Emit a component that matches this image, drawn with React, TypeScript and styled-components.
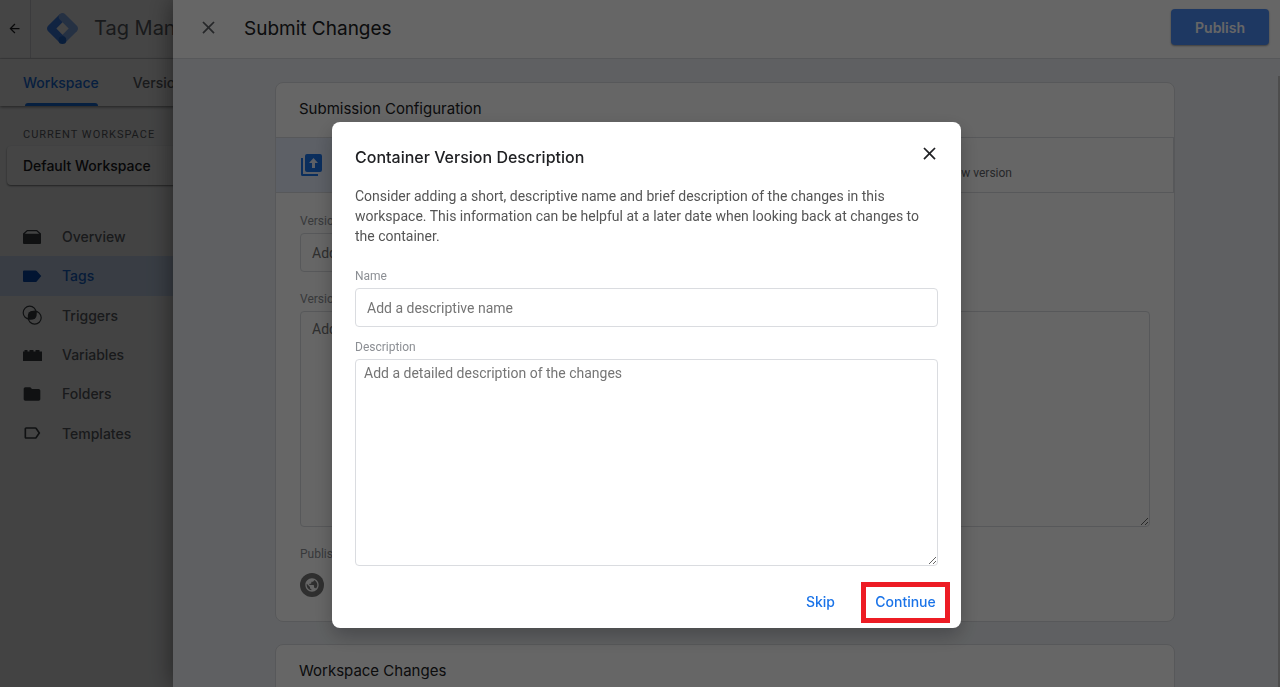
import React from "react";
import styled, { createGlobalStyle, css } from "styled-components";
import { MdArrowBack, MdClose, MdFolder, MdLabelOutline, MdPublic } from "react-icons/md";

const display = `"Google Sans", Inter, "Liberation Sans", sans-serif`;
const body = `Roboto, "Liberation Sans", sans-serif`;

const GlobalStyle = createGlobalStyle`
  *, *::before, *::after { box-sizing: border-box; }
  html, body, #root { height: 100%; }
  body { margin: 0; overflow: hidden; background: #fff; color: #3c4043; font-family: ${body}; font-size: 14px; }
  button { font: inherit; border: 0; padding: 0; background: none; color: inherit; cursor: pointer; }
  h1, h2, p, ul { margin: 0; padding: 0; font-weight: 400; }
`;

/* Workspace page */

const Page = styled.div`
  display: flex;
  flex-direction: column;
  height: 100%;
  background: #f8f9fa;
`;

const TopBar = styled.header`
  display: flex;
  align-items: stretch;
  height: 59px;
  background: #fff;
  border-bottom: 1px solid #dadce0;
`;

const BackButton = styled.button`
  display: flex;
  align-items: center;
  justify-content: center;
  width: 31px;
  padding: 0 2px 2px 0;
  color: #202124;
  border-right: 1px solid #dadce0;
`;

const Brand = styled.div`
  display: flex;
  align-items: center;
  gap: 16px;
  padding: 0 0 2px 16px;
  font-family: ${display};
  font-size: 20px;
  color: #5f6368;
  white-space: nowrap;
`;

const Tabs = styled.nav`
  display: flex;
  flex: none;
  gap: 34px;
  height: 47px;
  padding-left: 23px;
  background: #fff;
  box-shadow: 0 1px 3px rgba(0, 0, 0, 0.5);
`;

const Tab = styled.a<{ $active?: boolean }>`
  position: relative;
  display: flex;
  align-items: center;
  font-family: ${display};
  font-size: 14px;
  font-weight: 500;
  text-decoration: none;
  color: ${(p) => (p.$active ? "#1a73e8" : "#5f6368")};
  ${(p) =>
    p.$active &&
    css`
      &::after {
        content: "";
        position: absolute;
        left: 2px;
        right: 1px;
        bottom: 0;
        height: 3px;
        border-radius: 3px 3px 0 0;
        background: #1a73e8;
      }
    `}
`;

const Sidebar = styled.aside`
  display: flex;
  flex-direction: column;
  width: 260px;
  padding-top: 21px;
`;

const SidebarLabel = styled.div`
  padding-left: 23px;
  font-size: 11px;
  line-height: 16px;
  letter-spacing: 1px;
  color: #5f6368;
`;

const WorkspaceButton = styled.button`
  height: 39px;
  margin: 3px 0 32px 7px;
  padding-left: 16px;
  border-radius: 4px;
  background: #fff;
  box-shadow: 0 1px 2px rgba(0, 0, 0, 0.5);
  font-family: ${display};
  font-weight: 500;
  text-align: left;
  color: #202124;
`;

const NavList = styled.ul`
  display: grid;
  grid-template-rows: repeat(6, 1fr);
  height: 236px;
  list-style: none;
`;

const NavLink = styled.a<{ $active?: boolean }>`
  display: flex;
  align-items: center;
  gap: 20px;
  height: 100%;
  padding-left: 22px;
  font-family: ${display};
  font-weight: 500;
  text-decoration: none;
  color: ${(p) => (p.$active ? "#1967d2" : "#5f6368")};
  background: ${(p) => (p.$active ? "#d2e3fc" : "transparent")};

  svg {
    color: ${(p) => (p.$active ? "#0b4fb8" : "#3c4043")};
  }
`;

/* Submit drawer */

const DrawerScrim = styled.div`
  position: fixed;
  inset: 0;
  padding-left: 173px;
  background: rgba(0, 0, 0, 0.32);
`;

const Drawer = styled.section`
  position: relative;
  display: flex;
  flex-direction: column;
  height: 100%;
  overflow: hidden;
  background: #f1f3f4;
  box-shadow: 0 0 24px rgba(0, 0, 0, 0.5);
`;

const DrawerHeader = styled.header`
  display: flex;
  flex: none;
  align-items: center;
  height: 59px;
  padding: 0 11px 4px 24px;
  background: #fff;
  border-bottom: 1px solid #dadce0;
`;

const DrawerTitle = styled.h1`
  flex: 1;
  padding: 3px 0 0 24px;
  font-family: ${display};
  font-size: 19px;
  line-height: 24px;
  color: #202124;
`;

const IconButton = styled.button`
  display: flex;
  align-items: center;
  justify-content: center;
  width: 23px;
  height: 24px;
  color: #5f6368;
`;

const PublishButton = styled.button`
  width: 98px;
  height: 36px;
  border-radius: 4px;
  background: #4c8df6;
  box-shadow: 0 1px 2px rgba(0, 0, 0, 0.4);
  font-family: ${display};
  font-weight: 600;
  color: #fff;
`;

const DrawerBody = styled.div`
  display: flex;
  flex: 1;
  flex-direction: column;
  gap: 22px;
  padding: 23px 105px 0 102px;
  background: #eef1f5;
`;

const ScrollThumb = styled.div`
  position: absolute;
  top: 76px;
  right: 0;
  bottom: 0;
  width: 2px;
  background: #c1c1c1;
`;

const Card = styled.section`
  flex: none;
  border: 1px solid #dadce0;
  border-radius: 8px;
  background: #fff;
`;

const CardTitle = styled.h2`
  padding: 13px 23px 15px;
  font-family: ${display};
  font-size: 15px;
  line-height: 26px;
  color: #202124;
`;

const Options = styled.div`
  display: grid;
  grid-template-columns: 1fr 1fr;
  height: 56px;
  border: solid #dadce0;
  border-width: 1px 1px 1px 0;
`;

const Option = styled.button<{ $active?: boolean }>`
  display: flex;
  align-items: center;
  padding: 0 24px;
  color: #5f6368;
  background: ${(p) => (p.$active ? "#e8f0fe" : "transparent")};
`;

const OptionNote = styled.span`
  flex: 1;
  padding: 16px 137px 0 0;
  font-size: 12px;
  text-align: right;
`;

const CardForm = styled.form`
  display: flex;
  flex-direction: column;
  padding: 20px 24px 24px;
`;

const fieldBox = css`
  display: block;
  width: 100%;
  border: 1px solid #dadce0;
  border-radius: 4px;
  background: #fff;
  font-family: ${body};
  font-size: 14px;
  line-height: 20px;
  color: #3c4043;
  outline: 0;
  &::placeholder { color: #757575; opacity: 1; }
`;

const Label = styled.label`
  margin-bottom: 4px;
  font-size: 12px;
  line-height: 16px;
  color: #8c8f94;
`;

const Input = styled.input`
  ${fieldBox}
  height: 39px;
  padding: 0 11px;
`;

const VersionNameInput = styled(Input)`
  width: 50%;
`;

const VersionTextArea = styled.textarea`
  ${fieldBox}
  height: 216px;
  padding: 7px 11px;
`;

const DescriptionTextArea = styled.textarea`
  ${fieldBox}
  height: 207px;
  padding: 3px 8px;
`;

const Field = styled.div<{ $space: number }>`
  display: flex;
  flex-direction: column;
  margin-bottom: ${(p) => p.$space}px;
`;

const EnvironmentBadge = styled.div`
  display: flex;
  align-items: center;
  justify-content: center;
  width: 24px;
  height: 24px;
  margin-top: 7px;
  border-radius: 50%;
  background: #757575;
  color: #fff;
`;

/* Description dialog */

const DialogScrim = styled.div`
  position: fixed;
  inset: 0;
  display: flex;
  align-items: flex-start;
  justify-content: center;
  padding: 122px 0 0 13px;
  background: rgba(0, 0, 0, 0.6);
`;

const Dialog = styled.div`
  width: 629px;
  border-radius: 8px;
  background: #fff;
  box-shadow: 0 8px 20px rgba(0, 0, 0, 0.25);
`;

const DialogHeader = styled.header`
  display: flex;
  justify-content: space-between;
  padding: 19px 20px 0 23px;
`;

const DialogTitle = styled.h2`
  padding-top: 4px;
  font-family: ${display};
  font-size: 16px;
  font-weight: 500;
  line-height: 24px;
  color: #202124;
`;

const DialogText = styled.p`
  padding: 17px 23px 0;
  line-height: 20px;
  color: #555;
`;

const DialogForm = styled.form`
  display: flex;
  flex-direction: column;
  padding: 22px 23px 0;
`;

const DialogActions = styled.footer`
  display: flex;
  justify-content: flex-end;
  gap: 14px;
  padding: 16px 11px 5px;
`;

const TextButton = styled.button<{ $marked?: boolean }>`
  height: 41px;
  min-width: ${(p) => (p.$marked ? 89 : 53)}px;
  padding: 0 0 3px;
  border: ${(p) => (p.$marked ? "5px solid #ed1c24" : "0")};
  font-family: ${display};
  font-weight: 500;
  color: #1a73e8;
`;

const Logo = () => (
  <svg width="31" height="31" viewBox="0 0 2470 2470" aria-hidden="true">
    <path fill="#8ab4f8" d="M1449.8 2376 1021 1946.7l921.1-930.5 436.7 436.6z" />
    <path
      fill="#4285f4"
      d="M1452.9 527.1 1016.3 90.4 90.5 1016.2c-120.6 120.5-120.7 315.8-.2 436.4l.2.2 925.8 925.8 428.3-430.3L745 1235.1z"
    />
    <path
      fill="#8ab4f8"
      d="M2378.7 1016.2 1452.9 90.4c-120.6-120.6-316.1-120.6-436.7 0s-120.6 316.1 0 436.6l926.3 925.8c120.6 120.6 316.1 120.6 436.6 0s120.6-316.1 0-436.6z"
    />
    <circle fill="#246fdb" cx="1231.2" cy="2163.9" r="306" />
  </svg>
);

const OverviewIcon = () => (
  <svg width="20" height="20" viewBox="0 0 20 20" fill="currentColor" aria-hidden="true">
    <path d="M5 3h10l4 3.500V8H1V6.500zM5.500 4.300 2.800 6.800h14.400L14.500 4.300z" fillRule="evenodd" />
    <path d="M1 8h18v8a1 1 0 0 1-1 1H2a1 1 0 0 1-1-1z" />
  </svg>
);

const TagIcon = () => (
  <svg width="20" height="20" viewBox="0 0 20 20" fill="currentColor" aria-hidden="true">
    <path d="M2 4.500h11.500a1.500 1.500 0 0 1 1.200.600L19.300 10l-4.600 5.400a1.500 1.500 0 0 1-1.200.600H2a1 1 0 0 1-1-1V5.500a1 1 0 0 1 1-1z" />
  </svg>
);

const TriggersIcon = () => (
  <svg width="20" height="20" viewBox="0 0 20 20" aria-hidden="true">
    <g fill="none" stroke="currentColor" strokeWidth="1.200">
      <circle cx="7.700" cy="7.700" r="6.500" />
      <circle cx="12.700" cy="12.700" r="6.500" />
    </g>
    <path
      fill="currentColor"
      d="M14.100 6.400A6.500 6.500 0 0 1 6.400 14.100 6.500 6.500 0 0 1 14.100 6.400z"
    />
    <circle fill="currentColor" cx="10.200" cy="10.200" r="4.300" />
  </svg>
);

const VariablesIcon = () => (
  <svg width="20" height="20" viewBox="0 0 20 20" fill="currentColor" aria-hidden="true">
    <path d="M1 6.500h1.500V5h3v1.500h2V5h4v1.500h2V5h4v1.500H20V16H1z" />
  </svg>
);

const UploadIcon = () => (
  <svg width="24" height="24" viewBox="0 0 24 24" fill="#1a73e8" aria-hidden="true">
    <path d="M1 5h2v16h15v2H2.500A1.500 1.500 0 0 1 1 21.500z" />
    <path
      fillRule="evenodd"
      d="M7 1h13a2 2 0 0 1 2 2v14a2 2 0 0 1-2 2H7a2 2 0 0 1-2-2V3a2 2 0 0 1 2-2zm6.500 4L9 10h3v5h3v-5h3z"
    />
  </svg>
);

const navItems = [
  { label: "Overview", icon: <OverviewIcon /> },
  { label: "Tags", icon: <TagIcon />, active: true },
  { label: "Triggers", icon: <TriggersIcon /> },
  { label: "Variables", icon: <VariablesIcon /> },
  { label: "Folders", icon: <MdFolder size={20} /> },
  { label: "Templates", icon: <MdLabelOutline size={20} /> },
];

export default function App() {
  return (
    <>
      <GlobalStyle />
      <Page>
        <TopBar>
          <BackButton aria-label="Back">
            <MdArrowBack size={15} />
          </BackButton>
          <Brand>
            <Logo />
            Tag Manager
          </Brand>
        </TopBar>
        <Tabs>
          <Tab href="#workspace" $active>Workspace</Tab>
          <Tab href="#versions">Versions</Tab>
        </Tabs>
        <Sidebar>
          <SidebarLabel>CURRENT WORKSPACE</SidebarLabel>
          <WorkspaceButton>Default Workspace</WorkspaceButton>
          <NavList>
            {navItems.map((item) => (
              <li key={item.label}>
                <NavLink href={`#${item.label}`} $active={item.active}>
                  {item.icon}
                  {item.label}
                </NavLink>
              </li>
            ))}
          </NavList>
        </Sidebar>
      </Page>

      <DrawerScrim>
        <Drawer>
          <DrawerHeader>
            <IconButton aria-label="Close">
              <MdClose size={21} />
            </IconButton>
            <DrawerTitle>Submit Changes</DrawerTitle>
            <PublishButton>Publish</PublishButton>
          </DrawerHeader>
          <DrawerBody>
            <Card>
              <CardTitle>Submission Configuration</CardTitle>
              <Options>
                <Option $active aria-label="Publish">
                  <UploadIcon />
                </Option>
                <Option>
                  <OptionNote>New version</OptionNote>
                </Option>
              </Options>
              <CardForm>
                <Field $space={19}>
                  <Label htmlFor="version-name">Version</Label>
                  <VersionNameInput id="version-name" placeholder="Add" />
                </Field>
                <Field $space={19}>
                  <Label htmlFor="version-description">Version</Label>
                  <VersionTextArea id="version-description" placeholder="Add" />
                </Field>
                <Label as="div">Publish</Label>
                <EnvironmentBadge>
                  <MdPublic size={16} />
                </EnvironmentBadge>
              </CardForm>
            </Card>
            <Card>
              <CardTitle>Workspace Changes</CardTitle>
            </Card>
          </DrawerBody>
          <ScrollThumb />
        </Drawer>
      </DrawerScrim>

      <DialogScrim>
        <Dialog role="dialog" aria-labelledby="dialog-title">
          <DialogHeader>
            <DialogTitle id="dialog-title">Container Version Description</DialogTitle>
            <IconButton aria-label="Close dialog">
              <MdClose size={21} color="#202124" />
            </IconButton>
          </DialogHeader>
          <DialogText>
            Consider adding a short, descriptive name and brief description of the changes in this
            workspace. This information can be helpful at a later date when looking back at changes to
            the container.
          </DialogText>
          <DialogForm>
            <Field $space={12}>
              <Label htmlFor="name">Name</Label>
              <Input id="name" placeholder="Add a descriptive name" />
            </Field>
            <Label htmlFor="description">Description</Label>
            <DescriptionTextArea id="description" placeholder="Add a detailed description of the changes" />
          </DialogForm>
          <DialogActions>
            <TextButton>Skip</TextButton>
            <TextButton $marked>Continue</TextButton>
          </DialogActions>
        </Dialog>
      </DialogScrim>
    </>
  );
}
